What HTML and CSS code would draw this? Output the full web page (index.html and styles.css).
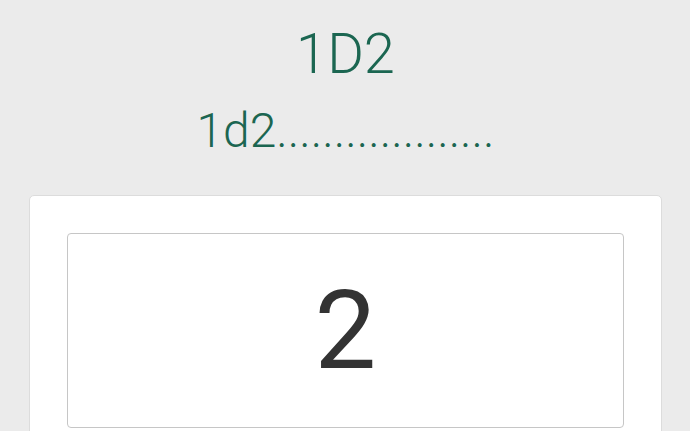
FILE: index.html
```html
<!DOCTYPE html>
<html>
<head>
<meta charset="utf-8">
<link rel="stylesheet" href="styles.css">
</head>
<body>
<div class="page">
  <h1 class="title">1D2</h1>
  <p class="subtitle">1d2...................</p>
  <div class="card">
    <div class="result">2</div>
  </div>
</div>
</body>
</html>
```
FILE: styles.css
```css
html, body {
  margin: 0;
  padding: 0;
  background: #ebebeb;
  font-family: Roboto, "Liberation Sans", sans-serif;
  overflow: hidden;
}
.page {
  padding: 21px 28px 0 29px;
  display: flex;
  flex-direction: column;
  align-items: stretch;
}
.title {
  margin: 0;
  text-align: center;
  font-size: 56px;
  font-weight: 300;
  line-height: 67px;
  color: #1b6651;
}
.subtitle {
  margin: 15px 0 0;
  text-align: center;
  font-size: 48px;
  font-weight: 300;
  line-height: 56px;
  color: #1b6651;
}
.card {
  margin-top: 36px;
  background: #fff;
  border: 1px solid #dcdcdc;
  border-radius: 5px;
  padding: 37px 37px 20px;
}
.result {
  height: 193px;
  border: 1px solid #c6c6c6;
  border-radius: 4px;
  display: flex;
  align-items: center;
  justify-content: center;
  font-size: 110px;
  font-weight: 400;
  color: #333;
}
```
